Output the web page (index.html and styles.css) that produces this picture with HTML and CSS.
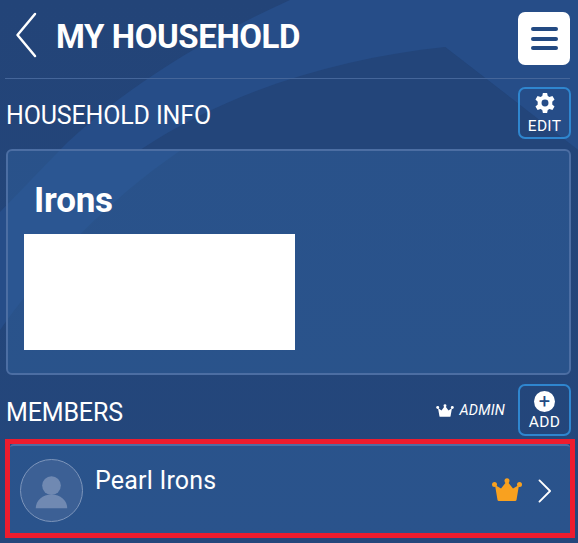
FILE: index.html
```html
<!DOCTYPE html>
<html lang="en">
<head>
<meta charset="utf-8">
<title>My Household</title>
<link rel="stylesheet" href="styles.css">
</head>
<body>
<div class="screen">
  <svg class="backdrop" viewBox="0 0 578 543" preserveAspectRatio="none" aria-hidden="true">
    <path class="swoosh-a" d="M290 0 C190 45 110 100 60 150 L0 212 L0 330 C70 230 190 120 300 95 C350 83 400 60 445 47 L578 150 L578 0 Z"/>
    <path class="swoosh-b" d="M445 47 C340 58 230 90 140 150 L578 150 Z" />
  </svg>
  <header class="topbar">
    <div class="topbar-left">
      <svg class="back" viewBox="0 0 22 46" aria-hidden="true"><path d="M20 2 L2.500 23 L20 44"/></svg>
      <h1 class="title">MY HOUSEHOLD</h1>
    </div>
    <button class="menu" aria-label="Menu">
      <span class="menu-line"></span><span class="menu-line"></span><span class="menu-line"></span>
    </button>
  </header>
  <section class="section-head info-head">
    <h2 class="section-title">HOUSEHOLD INFO</h2>
    <button class="action">
      <svg class="gear" viewBox="0 0 24 24" aria-hidden="true"><path fill-rule="evenodd" d="M14.300 1 L15 4.300 C15.700 4.600 16.300 4.900 16.900 5.400 L20.100 4.300 L22.400 8.300 L19.900 10.500 C20 11.200 20 12.800 19.900 13.500 L22.400 15.700 L20.100 19.700 L16.900 18.600 C16.300 19.100 15.700 19.400 15 19.700 L14.300 23 L9.700 23 L9 19.700 C8.300 19.400 7.700 19.100 7.100 18.600 L3.900 19.700 L1.600 15.700 L4.100 13.500 C4 12.800 4 11.200 4.100 10.500 L1.600 8.300 L3.900 4.300 L7.100 5.400 C7.700 4.900 8.300 4.600 9 4.300 L9.700 1 Z M12 8.200 A3.800 3.800 0 1 0 12 15.800 A3.800 3.800 0 1 0 12 8.200 Z"/></svg>
      <span class="action-label">EDIT</span>
    </button>
  </section>
  <section class="info-card">
    <h3 class="family">Irons</h3>
    <div class="redacted"></div>
  </section>
  <section class="section-head members-head">
    <h2 class="section-title">MEMBERS</h2>
    <div class="members-tools">
      <div class="legend">
        <svg class="legend-crown" viewBox="0 0 30 24" aria-hidden="true"><path d="M3 7 L9 11 L15 3 L21 11 L27 7 L24.500 21 Q24.300 22 23 22 L7 22 Q5.700 22 5.500 21 Z"/><circle cx="2.500" cy="6" r="2.500"/><circle cx="15" cy="3" r="2.500"/><circle cx="27.500" cy="6" r="2.500"/></svg>
        <span class="legend-text">ADMIN</span>
      </div>
      <button class="action">
        <span class="plus">+</span>
        <span class="action-label">ADD</span>
      </button>
    </div>
  </section>
  <div class="highlight">
    <article class="member">
      <div class="avatar">
        <svg viewBox="0 0 62 62" aria-hidden="true"><circle cx="31" cy="26" r="9.500"/><path d="M15 49 C15 41 22 35 31 35 C40 35 47 41 47 49 Z"/></svg>
      </div>
      <div class="member-name">Pearl Irons</div>
      <svg class="member-crown" viewBox="0 0 30 24" aria-hidden="true"><path d="M3 7 L9 10.500 L15 3 L21 10.500 L27 7 L24.500 22 Q24.300 23 23 23 L7 23 Q5.700 23 5.500 22 Z"/><circle cx="2.500" cy="6.500" r="2.500"/><circle cx="15" cy="2.800" r="2.500"/><circle cx="27.500" cy="6.500" r="2.500"/></svg>
      <svg class="forward" viewBox="0 0 15 26" aria-hidden="true"><path d="M1.500 1.500 L13 13 L1.500 24.500"/></svg>
    </article>
  </div>
</div>
</body>
</html>
```
FILE: styles.css
```css
* { box-sizing: border-box; }
html, body { margin: 0; padding: 0; }
body { background: #23457a; font-family: Roboto, "Liberation Sans", sans-serif; color: #fff; }
.screen { position: relative; width: 578px; height: 543px; overflow: hidden; padding: 12px 7px 0 6px; background: linear-gradient(180deg, #234478 0%, #24477c 100%); }
.backdrop { position: absolute; inset: 0; width: 100%; height: 100%; }
.swoosh-a { fill: #264d88; }
.swoosh-b { fill: #23457a; }
.topbar, .section-head, .info-card, .highlight { position: relative; }
.topbar { display: flex; justify-content: space-between; align-items: flex-start; height: 67px; border-bottom: 1px solid #45669a; margin: 0 1px 0 -1px; }
.topbar-left { display: flex; align-items: center; height: 50px; }
.back { width: 22px; height: 46px; margin: 0 0 4px 10px; fill: none; stroke: #fff; stroke-width: 2.500; stroke-linecap: round; stroke-linejoin: round; }
.title { margin: 0 0 0 19px; font-size: 33px; line-height: 50px; font-weight: 700; letter-spacing: -0.420px; }
.menu { width: 52px; height: 53px; border: 0; border-radius: 7px; background: #fff; display: flex; flex-direction: column; justify-content: center; align-items: center; gap: 5.500px; padding: 0; }
.menu-line { width: 27px; height: 4px; border-radius: 2px; background: #234a82; }
.section-head { display: flex; justify-content: space-between; align-items: center; }
.info-head { margin-top: 8px; height: 52px; }
.section-title { margin: 6px 0 0; font-size: 25px; line-height: 30px; font-weight: 400; letter-spacing: -0.150px; }
.action { width: 53px; height: 52px; border: 2px solid #2f86cf; border-radius: 7px; background: transparent; color: #fff; display: flex; flex-direction: column; align-items: center; padding: 0; font-family: inherit; }
.gear { width: 22px; height: 22px; margin-top: 3px; fill: #fff; }
.action-label { font-size: 15.500px; line-height: 17px; margin-top: 4px; letter-spacing: 0.300px; }
.info-card { margin-top: 10px; height: 226px; border: 2px solid #4c6ea3; border-radius: 6px; background: rgba(48, 96, 155, 0.5); padding: 16px 0 0 16px; }
.family { margin: 1px 0 0 10px; font-size: 35px; line-height: 66px; height: 66px; font-weight: 700; letter-spacing: -0.200px; }
.redacted { width: 271px; height: 116px; background: #fff; }
.members-head { margin-top: 9px; height: 52px; }
.members-tools { display: flex; align-items: center; }
.legend { display: flex; align-items: center; margin: 1px 13px 0 0; }
.legend-crown { width: 18px; height: 14px; fill: #fff; margin-right: 5px; }
.legend-text { font-size: 14.500px; font-style: italic; line-height: 18px; letter-spacing: 0.200px; }
.plus { width: 21px; height: 21px; margin-top: 5px; border-radius: 50%; background: #fff; color: #234a82; font-size: 20px; line-height: 20px; font-weight: 400; text-align: center; }
.action .plus + .action-label { margin-top: 2px; }
.highlight { margin: 3px 0 0 -1px; width: 570px; height: 99px; border: 5px solid #ed1c2e; }
.member { height: 89px; border-top: 2px solid #4c6ea3; border-radius: 4px 4px 0 0; background: rgba(48, 96, 155, 0.5); display: flex; align-items: flex-start; padding: 13px 18px 0 10px; }
.avatar { width: 63px; height: 63px; border: 1.500px solid #7d95bb; border-radius: 50%; background: #3c6095; flex: none; }
.avatar svg { display: block; width: 100%; height: 100%; fill: #7089b2; }
.member-name { margin: 4px 0 0 12px; font-size: 25px; line-height: 36px; flex: 1; letter-spacing: 0.200px; }
.member-crown { width: 30px; height: 24px; fill: #f9a11f; margin-top: 19px; }
.forward { width: 14px; height: 24px; margin: 20px 0 0 16px; fill: none; stroke: #fff; stroke-width: 2; stroke-linecap: round; stroke-linejoin: round; }
```
